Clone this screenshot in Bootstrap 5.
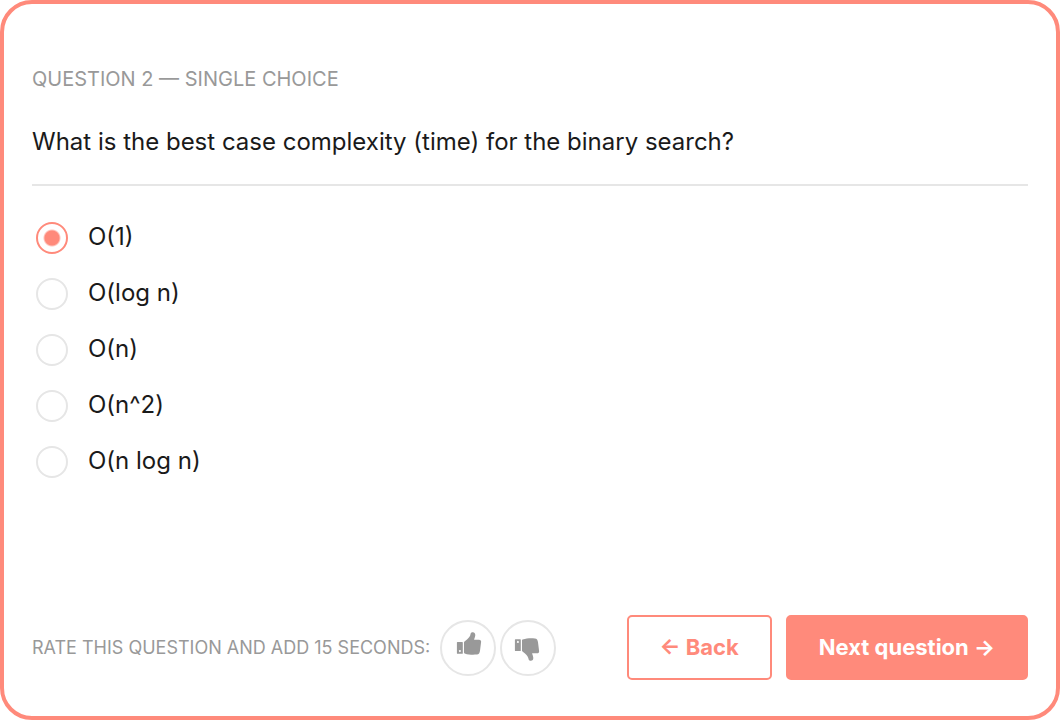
<!DOCTYPE html>
<html lang="en">
<head>
<meta charset="utf-8">
<meta name="viewport" content="width=device-width, initial-scale=1">
<title>Question 2</title>
<link href="https://cdn.jsdelivr.net/npm/bootstrap@5.3.0/dist/css/bootstrap.min.css" rel="stylesheet">
<style>
  :root { --coral: #ff8a7b; --line: #e6e6e6; --muted: #999; }
  body { font-family: "Inter", "Liberation Sans", sans-serif; color: #1a1a1a; background: #fff; }
  .quiz { border: 4px solid var(--coral); border-radius: 32px; padding: 60px 28px 36px; }
  .kicker { font-size: 20px; line-height: 30px; color: var(--muted); }
  .prompt { font-size: 24px; line-height: 36px; border-bottom: 2px solid var(--line); padding: 30px 0 24px; }
  .answers { padding: 24px 4px; }
  .answer { height: 56px; gap: 20px; }
  .answer .form-check-input { width: 32px; height: 32px; border: 2px solid var(--line); }
  .answer .form-check-input:checked {
    background: radial-gradient(circle, var(--coral) 7px, #fff 9px);
    border-color: var(--coral);
  }
  .answer .form-check-input:focus { box-shadow: 0 0 0 4px #ff8a7b40; }
  .answer label { font-size: 24px; line-height: 36px; padding-bottom: 2px; }
  .rate-label { font-size: 18px; line-height: 28px; color: var(--muted); margin-right: 6px; }
  .rate { width: 56px; height: 56px; border: 2px solid var(--line); color: var(--muted); }
  .btn-quiz {
    --bs-btn-color: var(--coral); --bs-btn-border-color: var(--coral); --bs-btn-bg: #fff;
    --bs-btn-hover-color: #fff; --bs-btn-hover-bg: var(--coral); --bs-btn-hover-border-color: var(--coral);
    --bs-btn-font-size: 22px; --bs-btn-font-weight: 700; --bs-btn-line-height: 33px;
    --bs-btn-padding-y: 14px; --bs-btn-padding-x: 31px;
    --bs-btn-border-width: 2px; --bs-btn-border-radius: 5px;
  }
  .btn-next { --bs-btn-color: #fff; --bs-btn-bg: var(--coral); }
  .steps { gap: 14px; }
</style>
</head>
<body>
<form class="quiz min-vh-100 d-flex flex-column">
  <div class="kicker text-uppercase">Question 2 — Single choice</div>
  <h1 class="prompt fw-normal m-0" id="prompt">What is the best case complexity (time) for the binary search?</h1>

  <div class="answers" role="radiogroup" aria-labelledby="prompt">
    <div class="answer d-flex align-items-center">
      <input class="form-check-input m-0" type="radio" name="answer" id="a1" checked><label for="a1">O(1)</label>
    </div>
    <div class="answer d-flex align-items-center">
      <input class="form-check-input m-0" type="radio" name="answer" id="a2"><label for="a2">O(log n)</label>
    </div>
    <div class="answer d-flex align-items-center">
      <input class="form-check-input m-0" type="radio" name="answer" id="a3"><label for="a3">O(n)</label>
    </div>
    <div class="answer d-flex align-items-center">
      <input class="form-check-input m-0" type="radio" name="answer" id="a4"><label for="a4">O(n^2)</label>
    </div>
    <div class="answer d-flex align-items-center">
      <input class="form-check-input m-0" type="radio" name="answer" id="a5"><label for="a5">O(n log n)</label>
    </div>
  </div>

  <div class="mt-auto d-flex flex-wrap align-items-center justify-content-between gap-3">
    <div class="d-flex align-items-center gap-1">
      <span class="rate-label text-uppercase">Rate this question and add 15 seconds:</span>
      <button type="button" class="rate btn rounded-circle p-0 d-flex align-items-center justify-content-center" aria-label="Thumbs up">
        <svg width="28" height="28" viewBox="-1 4 28 28" overflow="visible" fill="currentColor" aria-hidden="true">
          <path fill-rule="evenodd" d="M2.500 12h4.700q.6 0 .6.6v10.600q0 .6-.6.6H2.500q-.6 0-.6-.6V12.600q0-.6.6-.6zM4.900 19.900a1 1 0 1 0 .01 0z"/>
          <path d="M9 12.500q0-.6.5-.9l2.500-2.100c1.800-1.800 3.200-3.300 3.500-5.300.2-1.500 1-2 2.300-2 1.800.2 2.600 1.300 2.500 3.100-.1 1.500-.8 2.900-1.200 4.500h4.900c1.500 0 2.300.9 2.100 2.300l-1.100 8.700c-.3 2.300-1.200 3.700-3.100 3.800-3.800.2-7.800.4-12.300-1.200q-.6-.2-.6-.8z"/>
        </svg>
      </button>
      <button type="button" class="rate btn rounded-circle p-0 d-flex align-items-center justify-content-center" aria-label="Thumbs down">
        <svg width="28" height="28" viewBox="0 0 28 28" overflow="visible" fill="currentColor" aria-hidden="true">
          <g transform="translate(-1 29) scale(1 -1)">
            <path fill-rule="evenodd" d="M2.500 12h4.700q.6 0 .6.6v10.600q0 .6-.6.6H2.500q-.6 0-.6-.6V12.600q0-.6.6-.6zM4.900 19.900a1 1 0 1 0 .01 0z"/>
            <path d="M9 12.500q0-.6.5-.9l2.500-2.100c1.800-1.800 3.200-3.300 3.500-5.300.2-1.500 1-2 2.300-2 1.800.2 2.600 1.300 2.500 3.100-.1 1.500-.8 2.900-1.200 4.500h4.900c1.500 0 2.300.9 2.100 2.300l-1.100 8.700c-.3 2.300-1.200 3.700-3.100 3.800-3.800.2-7.800.4-12.300-1.200q-.6-.2-.6-.8z"/>
          </g>
        </svg>
      </button>
    </div>
    <div class="steps d-flex">
      <button type="button" class="btn btn-quiz">← Back</button>
      <button type="submit" class="btn btn-quiz btn-next">Next question →</button>
    </div>
  </div>
</form>
<script src="https://cdn.jsdelivr.net/npm/bootstrap@5.3.0/dist/js/bootstrap.bundle.min.js"></script>
</body>
</html>
